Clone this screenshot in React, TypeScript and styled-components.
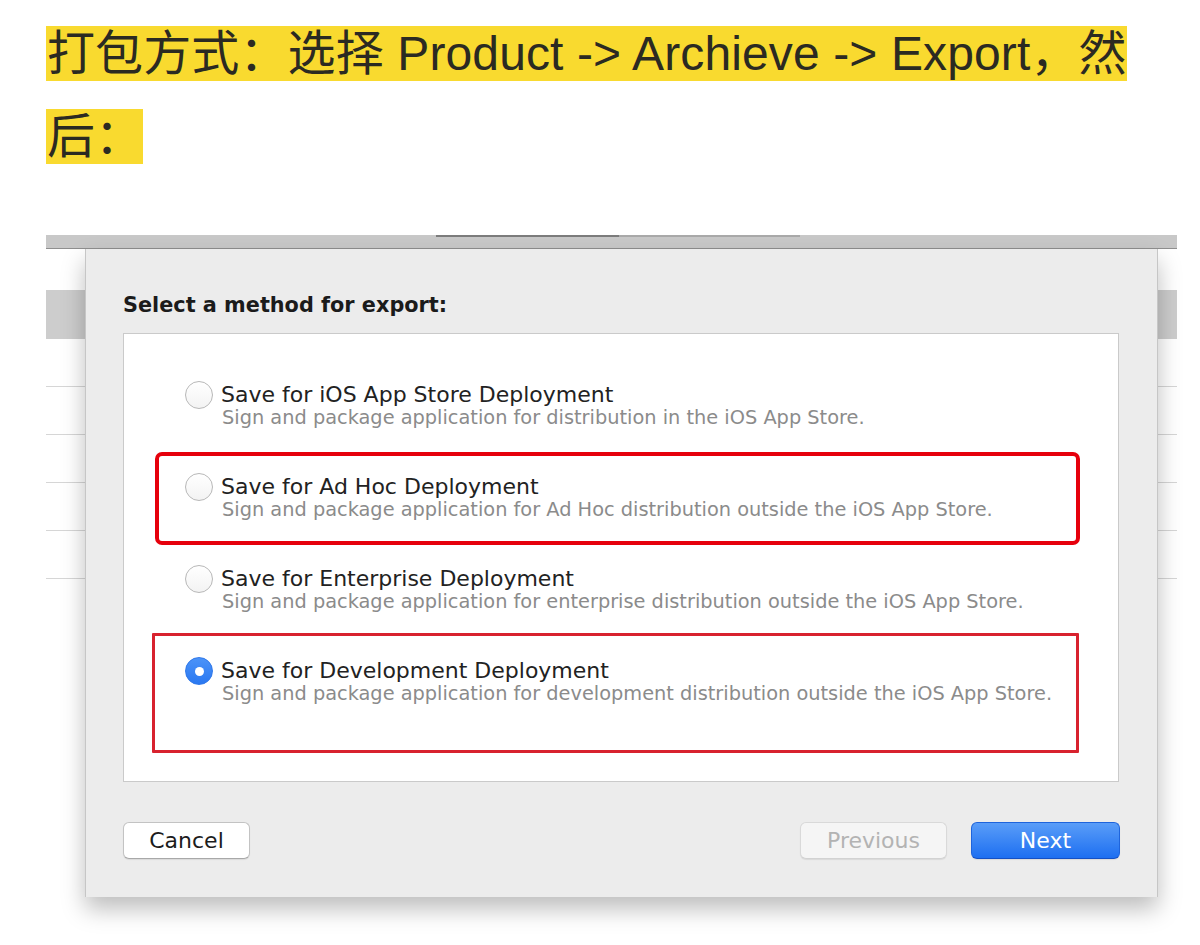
import styled, { createGlobalStyle } from "styled-components";

const GlobalStyle = createGlobalStyle`
  html, body {
    margin: 0;
    background: #ffffff;
  }
`;

const Page = styled.div`
  width: 1200px;
  height: 945px;
  box-sizing: border-box;
  padding: 26px 0 0 46px;
  overflow: hidden;
  background: #ffffff;
`;

const Heading = styled.div`
  display: flex;
  flex-direction: column;
  align-items: flex-start;
  gap: 28px;
  font-family: "Liberation Sans", "Noto Sans CJK SC", sans-serif;
  font-size: 48px;
  letter-spacing: 0.12px;
  color: #2b2a22;
`;

const Mark = styled.span`
  display: inline-block;
  height: 55px;
  line-height: 55px;
  padding-left: 1px;
  background: #f9da2f;
  white-space: nowrap;
`;

const Window = styled.div`
  margin-top: 71px;
  width: 1131px;
  display: flex;
  flex-direction: column;
  font-family: "DejaVu Sans", "Liberation Sans", sans-serif;
`;

const TitleBar = styled.div`
  height: 13px;
  display: flex;
  align-items: flex-start;
  padding-left: 390px;
  background: #c8c8c8;
  border-bottom: 1px solid #8f8f8f;
`;

const TabLine = styled.div<{ $w: number; $dark?: boolean }>`
  width: ${(p) => p.$w}px;
  height: 2px;
  background: ${(p) => (p.$dark ? "#7c7c7c" : "#a9a9a9")};
`;

const Stage = styled.div`
  display: grid;
  & > * {
    grid-area: 1 / 1;
  }
`;

const Backdrop = styled.div`
  padding-top: 41px;
  display: flex;
  flex-direction: column;
`;

const HeaderRow = styled.div`
  height: 49px;
  background: #cdcdcd;
`;

const ListRow = styled.div`
  height: 47px;
  border-bottom: 1px solid #d6d6d6;
`;

const Sheet = styled.div`
  margin-left: 39px;
  width: 1073px;
  height: 648px;
  box-sizing: border-box;
  padding: 44px 37px 0 37px;
  background: #ececec;
  border-left: 1px solid #c6c6c6;
  border-right: 1px solid #c6c6c6;
  box-shadow: 0 12px 22px rgba(0, 0, 0, 0.26);
  display: flex;
  flex-direction: column;
  align-self: start;
`;

const Prompt = styled.div`
  font-size: 20.8px;
  font-weight: bold;
  line-height: 24px;
  color: #1b1b1b;
`;

const OptionsBox = styled.div`
  position: relative;
  margin-top: 16px;
  width: 996px;
  height: 449px;
  box-sizing: border-box;
  padding: 49px 0 0 61px;
  background: #ffffff;
  border: 1px solid #cacaca;
  display: flex;
  flex-direction: column;
  gap: 46px;
`;

const Option = styled.div`
  display: grid;
  grid-template-columns: 28px auto;
  grid-template-rows: 24px 22px;
  column-gap: 8px;
  align-items: center;
`;

const Radio = styled.span<{ $checked?: boolean }>`
  grid-row: 1;
  width: 28px;
  height: 28px;
  margin: -2px 0;
  box-sizing: border-box;
  border-radius: 50%;
  display: flex;
  align-items: center;
  justify-content: center;
  border: 1.5px solid ${(p) => (p.$checked ? "#2f78ea" : "#b8b8b8")};
  background: ${(p) =>
    p.$checked
      ? "linear-gradient(#4b93f8, #2a78f1)"
      : "linear-gradient(#ffffff, #f3f3f3)"};

  &::after {
    content: "";
    display: ${(p) => (p.$checked ? "block" : "none")};
    width: 9px;
    height: 9px;
    border-radius: 50%;
    background: #ffffff;
  }
`;

const OptionTitle = styled.div`
  grid-row: 1;
  grid-column: 2;
  font-size: 22px;
  line-height: 24px;
  color: #222222;
  white-space: nowrap;
`;

const OptionNote = styled.div`
  grid-row: 2;
  grid-column: 2;
  padding-left: 1px;
  font-size: 19.35px;
  line-height: 22px;
  color: #8b8b8b;
  white-space: nowrap;
`;

const Annotation = styled.div<{ $thick: number; $radius: number; $color: string }>`
  position: absolute;
  box-sizing: border-box;
  border: ${(p) => p.$thick}px solid ${(p) => p.$color};
  border-radius: ${(p) => p.$radius}px;
  pointer-events: none;
`;

const Footer = styled.div`
  margin-top: 40px;
  display: flex;
  align-items: center;
  gap: 24px;
`;

const Spacer = styled.div`
  flex: 1;
`;

const Button = styled.button<{ $variant?: "primary" | "disabled" }>`
  height: 37px;
  box-sizing: border-box;
  border-radius: 6px;
  font-family: "DejaVu Sans", "Liberation Sans", sans-serif;
  font-size: 22px;
  line-height: 1;
  padding: 0;
  border: 1px solid
    ${(p) =>
      p.$variant === "primary"
        ? "#1e64dc"
        : p.$variant === "disabled"
        ? "#d9d9d9"
        : "#c3c3c3"};
  border-bottom-color: ${(p) =>
    p.$variant === "primary"
      ? "#1450c4"
      : p.$variant === "disabled"
      ? "#d2d2d2"
      : "#a8a8a8"};
  background: ${(p) =>
    p.$variant === "primary"
      ? "linear-gradient(#5a9df8, #1d6ff1)"
      : p.$variant === "disabled"
      ? "#f5f5f5"
      : "#ffffff"};
  color: ${(p) =>
    p.$variant === "primary"
      ? "#ffffff"
      : p.$variant === "disabled"
      ? "#b3b3b3"
      : "#1c1c1c"};
  box-shadow: 0 1px 1px rgba(0, 0, 0, 0.08);
`;

const options = [
  {
    title: "Save for iOS App Store Deployment",
    note: "Sign and package application for distribution in the iOS App Store.",
  },
  {
    title: "Save for Ad Hoc Deployment",
    note: "Sign and package application for Ad Hoc distribution outside the iOS App Store.",
  },
  {
    title: "Save for Enterprise Deployment",
    note: "Sign and package application for enterprise distribution outside the iOS App Store.",
  },
  {
    title: "Save for Development Deployment",
    note: "Sign and package application for development distribution outside the iOS App Store.",
    checked: true,
  },
];

export default function App() {
  return (
    <>
      <GlobalStyle />
      <Page>
        <Heading>
          <Mark>打包方式：选择 Product -&gt; Archieve -&gt; Export，然</Mark>
          <Mark>后：</Mark>
        </Heading>

        <Window>
          <TitleBar>
            <TabLine $w={183} $dark />
            <TabLine $w={181} />
          </TitleBar>
          <Stage>
            <Backdrop>
              <HeaderRow />
              {[0, 1, 2, 3, 4].map((i) => (
                <ListRow key={i} />
              ))}
            </Backdrop>
            <Sheet>
              <Prompt>Select a method for export:</Prompt>
              <OptionsBox>
                {options.map((o) => (
                  <Option key={o.title}>
                    <Radio $checked={o.checked} />
                    <OptionTitle>{o.title}</OptionTitle>
                    <OptionNote>{o.note}</OptionNote>
                  </Option>
                ))}
                <Annotation
                  $thick={4}
                  $radius={7}
                  $color="#e6000c"
                  style={{ left: 31, top: 118, width: 925, height: 93 }}
                />
                <Annotation
                  $thick={3}
                  $radius={1}
                  $color="#d8222e"
                  style={{ left: 28, top: 299, width: 927, height: 120 }}
                />
              </OptionsBox>
              <Footer>
                <Button style={{ width: 127 }}>Cancel</Button>
                <Spacer />
                <Button $variant="disabled" style={{ width: 147 }}>
                  Previous
                </Button>
                <Button $variant="primary" style={{ width: 149 }}>
                  Next
                </Button>
              </Footer>
            </Sheet>
          </Stage>
        </Window>
      </Page>
    </>
  );
}
